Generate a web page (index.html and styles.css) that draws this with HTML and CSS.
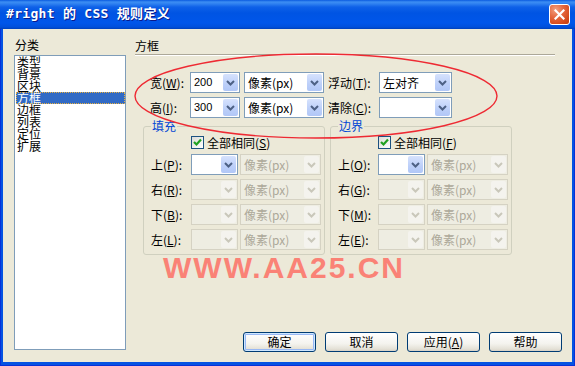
FILE: index.html
```html
<!DOCTYPE html>
<html lang="zh-CN">
<head>
<meta charset="utf-8">
<title>#right 的 CSS 规则定义</title>
<link rel="stylesheet" href="styles.css">
</head>
<body>
<div class="window">
  <div class="titlebar">
    <span class="title">#right 的 CSS 规则定义</span>
    <div class="close">
      <svg width="11" height="11" viewBox="0 0 11 11"><path d="M1.5 1.5 L9.5 9.5 M9.5 1.5 L1.5 9.5" stroke="#fff" stroke-width="2.2" stroke-linecap="square"/></svg>
    </div>
  </div>
  <div class="content">
    <div class="left">
      <div class="cat-label">分类</div>
      <ul class="list">
        <li>类型</li>
        <li>背景</li>
        <li>区块</li>
        <li class="sel">方框</li>
        <li>边框</li>
        <li>列表</li>
        <li>定位</li>
        <li>扩展</li>
      </ul>
    </div>
    <div class="right">
      <div class="heading">方框</div>
      <div class="sep"></div>
      <div class="rows">
        <div class="row">
          <span class="lbl l1">宽(<u>W</u>):</span>
          <div class="dd w50"><span class="val num">200</span><span class="btn"><svg width="9" height="6" viewBox="0 0 9 6"><polyline points="1,1 4.5,4.5 8,1" fill="none" stroke="#4D6185" stroke-width="2"/></svg></span></div>
          <div class="dd w80"><span class="val">像素(px)</span><span class="btn"><svg width="9" height="6" viewBox="0 0 9 6"><polyline points="1,1 4.5,4.5 8,1" fill="none" stroke="#4D6185" stroke-width="2"/></svg></span></div>
          <span class="lbl l2">浮动(<u>T</u>):</span>
          <div class="dd w73"><span class="val">左对齐</span><span class="btn"><svg width="9" height="6" viewBox="0 0 9 6"><polyline points="1,1 4.5,4.5 8,1" fill="none" stroke="#4D6185" stroke-width="2"/></svg></span></div>
        </div>
        <div class="row">
          <span class="lbl l1">高(<u>I</u>):</span>
          <div class="dd w50"><span class="val num">300</span><span class="btn"><svg width="9" height="6" viewBox="0 0 9 6"><polyline points="1,1 4.5,4.5 8,1" fill="none" stroke="#4D6185" stroke-width="2"/></svg></span></div>
          <div class="dd w80"><span class="val">像素(px)</span><span class="btn"><svg width="9" height="6" viewBox="0 0 9 6"><polyline points="1,1 4.5,4.5 8,1" fill="none" stroke="#4D6185" stroke-width="2"/></svg></span></div>
          <span class="lbl l2">清除(<u>C</u>):</span>
          <div class="dd w73"><span class="val"></span><span class="btn"><svg width="9" height="6" viewBox="0 0 9 6"><polyline points="1,1 4.5,4.5 8,1" fill="none" stroke="#4D6185" stroke-width="2"/></svg></span></div>
        </div>
      </div>
      <div class="groups">
        <fieldset class="group">
          <legend>填充</legend>
          <div class="ginner">
            <div class="chk-row">
              <span class="chk"><svg width="11" height="11" viewBox="0 0 11 11"><polyline points="2,5 4.5,7.5 9,2.5" fill="none" stroke="#21A121" stroke-width="2.2"/></svg></span>
              <span>全部相同(<u>S</u>)</span>
            </div>
            <div class="grow">
              <span class="glbl">上(<u>P</u>):</span>
              <div class="dd w47"><span class="val"></span><span class="btn"><svg width="9" height="6" viewBox="0 0 9 6"><polyline points="1,1 4.5,4.5 8,1" fill="none" stroke="#4D6185" stroke-width="2"/></svg></span></div>
              <div class="dd w81 dis"><span class="val">像素(px)</span><span class="btn"><svg width="9" height="6" viewBox="0 0 9 6"><polyline points="1,1 4.5,4.5 8,1" fill="none" stroke="#C9C7BA" stroke-width="2"/></svg></span></div>
            </div>
            <div class="grow">
              <span class="glbl">右(<u>R</u>):</span>
              <div class="dd w47 dis"><span class="val"></span><span class="btn"><svg width="9" height="6" viewBox="0 0 9 6"><polyline points="1,1 4.5,4.5 8,1" fill="none" stroke="#C9C7BA" stroke-width="2"/></svg></span></div>
              <div class="dd w81 dis"><span class="val">像素(px)</span><span class="btn"><svg width="9" height="6" viewBox="0 0 9 6"><polyline points="1,1 4.5,4.5 8,1" fill="none" stroke="#C9C7BA" stroke-width="2"/></svg></span></div>
            </div>
            <div class="grow">
              <span class="glbl">下(<u>B</u>):</span>
              <div class="dd w47 dis"><span class="val"></span><span class="btn"><svg width="9" height="6" viewBox="0 0 9 6"><polyline points="1,1 4.5,4.5 8,1" fill="none" stroke="#C9C7BA" stroke-width="2"/></svg></span></div>
              <div class="dd w81 dis"><span class="val">像素(px)</span><span class="btn"><svg width="9" height="6" viewBox="0 0 9 6"><polyline points="1,1 4.5,4.5 8,1" fill="none" stroke="#C9C7BA" stroke-width="2"/></svg></span></div>
            </div>
            <div class="grow">
              <span class="glbl">左(<u>L</u>):</span>
              <div class="dd w47 dis"><span class="val"></span><span class="btn"><svg width="9" height="6" viewBox="0 0 9 6"><polyline points="1,1 4.5,4.5 8,1" fill="none" stroke="#C9C7BA" stroke-width="2"/></svg></span></div>
              <div class="dd w81 dis"><span class="val">像素(px)</span><span class="btn"><svg width="9" height="6" viewBox="0 0 9 6"><polyline points="1,1 4.5,4.5 8,1" fill="none" stroke="#C9C7BA" stroke-width="2"/></svg></span></div>
            </div>
          </div>
        </fieldset>
        <fieldset class="group">
          <legend>边界</legend>
          <div class="ginner">
            <div class="chk-row">
              <span class="chk"><svg width="11" height="11" viewBox="0 0 11 11"><polyline points="2,5 4.5,7.5 9,2.5" fill="none" stroke="#21A121" stroke-width="2.2"/></svg></span>
              <span>全部相同(<u>F</u>)</span>
            </div>
            <div class="grow">
              <span class="glbl">上(<u>O</u>):</span>
              <div class="dd w47"><span class="val"></span><span class="btn"><svg width="9" height="6" viewBox="0 0 9 6"><polyline points="1,1 4.5,4.5 8,1" fill="none" stroke="#4D6185" stroke-width="2"/></svg></span></div>
              <div class="dd w81 dis"><span class="val">像素(px)</span><span class="btn"><svg width="9" height="6" viewBox="0 0 9 6"><polyline points="1,1 4.5,4.5 8,1" fill="none" stroke="#C9C7BA" stroke-width="2"/></svg></span></div>
            </div>
            <div class="grow">
              <span class="glbl">右(<u>G</u>):</span>
              <div class="dd w47 dis"><span class="val"></span><span class="btn"><svg width="9" height="6" viewBox="0 0 9 6"><polyline points="1,1 4.5,4.5 8,1" fill="none" stroke="#C9C7BA" stroke-width="2"/></svg></span></div>
              <div class="dd w81 dis"><span class="val">像素(px)</span><span class="btn"><svg width="9" height="6" viewBox="0 0 9 6"><polyline points="1,1 4.5,4.5 8,1" fill="none" stroke="#C9C7BA" stroke-width="2"/></svg></span></div>
            </div>
            <div class="grow">
              <span class="glbl">下(<u>M</u>):</span>
              <div class="dd w47 dis"><span class="val"></span><span class="btn"><svg width="9" height="6" viewBox="0 0 9 6"><polyline points="1,1 4.5,4.5 8,1" fill="none" stroke="#C9C7BA" stroke-width="2"/></svg></span></div>
              <div class="dd w81 dis"><span class="val">像素(px)</span><span class="btn"><svg width="9" height="6" viewBox="0 0 9 6"><polyline points="1,1 4.5,4.5 8,1" fill="none" stroke="#C9C7BA" stroke-width="2"/></svg></span></div>
            </div>
            <div class="grow">
              <span class="glbl">左(<u>E</u>):</span>
              <div class="dd w47 dis"><span class="val"></span><span class="btn"><svg width="9" height="6" viewBox="0 0 9 6"><polyline points="1,1 4.5,4.5 8,1" fill="none" stroke="#C9C7BA" stroke-width="2"/></svg></span></div>
              <div class="dd w81 dis"><span class="val">像素(px)</span><span class="btn"><svg width="9" height="6" viewBox="0 0 9 6"><polyline points="1,1 4.5,4.5 8,1" fill="none" stroke="#C9C7BA" stroke-width="2"/></svg></span></div>
            </div>
          </div>
        </fieldset>
      </div>
      <div class="buttons">
        <div class="xbtn default">确定</div>
        <div class="xbtn">取消</div>
        <div class="xbtn">应用(<u>A</u>)</div>
        <div class="xbtn">帮助</div>
      </div>
    </div>
  </div>
  <div class="watermark">WWW.AA25.CN</div>
  <svg class="ellipse" width="575" height="366" viewBox="0 0 575 366">
    <ellipse cx="316" cy="96" rx="181" ry="42" fill="none" stroke="#EE2A33" stroke-width="1.4"/>
  </svg>
</div>
</body>
</html>
```

FILE: styles.css
```css
html, body {
  margin: 0;
  padding: 0;
}

body {
  width: 575px;
  height: 366px;
  overflow: hidden;
  font-family: "Noto Sans CJK SC", "Noto Sans", sans-serif;
  font-size: 12px;
  color: #000;
}

u {
  text-decoration: underline;
  text-underline-offset: 1px;
}

.window {
  position: relative;
  width: 575px;
  height: 366px;
  display: flex;
  flex-direction: column;
  background: #0553E2;
  box-shadow: inset 1px 0 #0831D9, inset -1px 0 #0831D9, inset 0 -1px #0831D9;
}

.titlebar {
  flex: none;
  height: 29px;
  display: flex;
  align-items: center;
  padding: 0 5px 0 6px;
  background: linear-gradient(to bottom,
    #0A5BE0 0px, #3C8EF3 2px, #2D7FF0 4px, #0E61E8 7px,
    #0054E3 13px, #0056EA 23px, #0050DC 27px, #0040BA 29px);
}

.title {
  flex: 1;
  color: #fff;
  font-family: "DejaVu Sans Mono", "Noto Sans CJK SC", monospace;
  font-weight: bold;
  font-size: 13px;
  line-height: 16px;
  letter-spacing: 0.3px;
  text-shadow: 1px 1px 0 #0A1A8C;
  padding-bottom: 1px;
}

.close {
  width: 21px;
  height: 21px;
  box-sizing: border-box;
  border: 1px solid #fff;
  border-radius: 3px;
  background: radial-gradient(circle at 30% 25%, #F2A080 0%, #E5683F 40%, #D44A1C 75%, #C13C10 100%);
  display: flex;
  align-items: center;
  justify-content: center;
}

.content {
  flex: 1;
  display: flex;
  gap: 9px;
  margin: 0 3px 4px 3px;
  padding: 10px 10px 10px 11px;
  background: #ECE9D8;
}

.left {
  width: 112px;
  flex: none;
  display: flex;
  flex-direction: column;
}

.cat-label {
  line-height: 12px;
  height: 12px;
  margin-bottom: 4px;
  padding-left: 1px;
}

.list {
  margin: 0;
  padding: 0;
  list-style: none;
  width: 112px;
  height: 295px;
  box-sizing: border-box;
  border: 1px solid #7F9DB9;
  background: #fff;
}

.list li {
  height: 12px;
  line-height: 12px;
  margin-left: 1px;
  padding-left: 1px;
}

.list li.sel {
  background: #316AC5;
  color: #fff;
  outline: 1px dotted #E8B040;
  outline-offset: -1px;
}

.right {
  flex: 1;
  display: flex;
  flex-direction: column;
}

.heading {
  padding-top: 1px;
  line-height: 12px;
  height: 12px;
}

.sep {
  margin-top: 2px;
  margin-right: 7px;
  height: 1px;
  background: #ACA899;
  border-bottom: 1px solid #fff;
}

.rows {
  margin-top: 16px;
  padding-left: 15px;
  display: flex;
  flex-direction: column;
  gap: 4px;
}

.row {
  display: flex;
  align-items: center;
  gap: 4px;
  height: 21px;
}

.lbl {
  line-height: 12px;
  white-space: nowrap;
}

.l1 { width: 36px; }
.l2 { width: 47px; }

.dd {
  display: flex;
  height: 21px;
  box-sizing: border-box;
  border: 1px solid #7F9DB9;
  background: #fff;
  flex: none;
}

.w50 { width: 50px; }
.w80 { width: 80px; }
.w73 { width: 73px; }
.w47 { width: 47px; }
.w81 { width: 81px; }

.val {
  flex: 1;
  min-width: 0;
  padding-left: 3px;
  line-height: 19px;
  white-space: nowrap;
  overflow: hidden;
}

.val.num {
  font-family: "Liberation Sans", Arial, sans-serif;
  font-size: 11px;
}

.btn {
  width: 15px;
  margin: 1px;
  border-radius: 2px;
  background: linear-gradient(to bottom, #D6E2FD, #BCCFF9 60%, #B1C7F7);
  display: flex;
  align-items: center;
  justify-content: center;
}

.dd.dis {
  border-color: #D5D2C3;
  background: #EEEDE2;
  color: #ACA899;
}

.dd.dis .btn {
  background: #F4F3EE;
}

.groups {
  margin-top: 2px;
  margin-left: 8px;
  display: flex;
  gap: 5px;
}

.group {
  width: 182px;
  box-sizing: border-box;
  margin: 0;
  padding: 4px 3px 4px 7px;
  border: 1px solid #D0D0BF;
  border-radius: 3px;
  min-width: 0;
}

.group legend {
  padding: 0 1px;
  margin: 0;
  line-height: 12px;
  color: #0046D5;
}

.ginner {
  display: flex;
  flex-direction: column;
  gap: 4px;
}

.chk-row {
  display: flex;
  align-items: center;
  gap: 3px;
  height: 13px;
  margin-left: 40px;
  margin-bottom: 1px;
  line-height: 12px;
}

.chk {
  width: 13px;
  height: 13px;
  box-sizing: border-box;
  border: 1px solid #1C5180;
  background: linear-gradient(135deg, #DCDCD7, #FFFFFF);
  display: flex;
  align-items: center;
  justify-content: center;
}

.grow {
  display: flex;
  align-items: center;
  gap: 2px;
  height: 21px;
}

.glbl {
  width: 38px;
  line-height: 12px;
  white-space: nowrap;
}

.buttons {
  margin-top: auto;
  display: flex;
  justify-content: flex-end;
  gap: 9px;
}

.xbtn {
  width: 73px;
  height: 20px;
  box-sizing: border-box;
  border: 1px solid #003C74;
  border-radius: 3px;
  background: linear-gradient(to bottom, #FFFFFF 0%, #F4F3EE 60%, #E3E0D5 90%, #D6D0C5 100%);
  text-align: center;
  line-height: 18px;
}

.xbtn.default {
  box-shadow: inset 0 0 0 1px #CEE7FF, inset 0 0 0 2px #98B8F4;
}

.watermark {
  position: absolute;
  left: 163px;
  top: 253px;
  font-family: "Liberation Sans", Arial, sans-serif;
  font-weight: bold;
  font-size: 30px;
  line-height: 30px;
  letter-spacing: 2px;
  color: #FA8276;
  pointer-events: none;
}

.ellipse {
  position: absolute;
  left: 0;
  top: 0;
  pointer-events: none;
}
```
